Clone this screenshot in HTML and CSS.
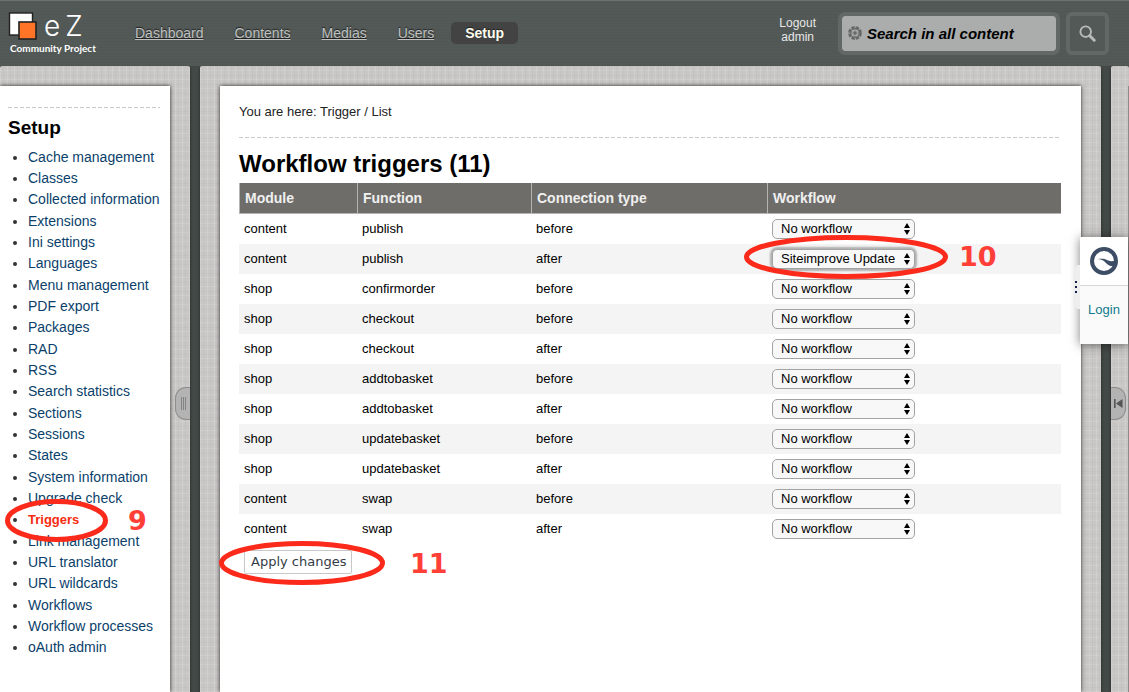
FILE: index.html
```html
<!DOCTYPE html>
<html lang="en">
<head>
<meta charset="utf-8">
<title>Workflow triggers</title>
<link rel="stylesheet" href="styles.css">
</head>
<body>
<svg class="defs" aria-hidden="true">
  <symbol id="updown" viewBox="0 0 6 12"><path d="M3 0 6 5H0zM3 12 0 7h6z"/></symbol>
</svg>
<header class="header">
  <a class="logo" href="#">
    <span class="logo-row">
      <svg class="logo-mark" width="30" height="29" viewBox="0 0 30 29">
        <rect x="1.500" y="1" width="23" height="22" fill="#fff" stroke="#222" stroke-width="1.4"/>
        <rect x="11" y="10" width="17" height="17" fill="#ff7426" stroke="#222" stroke-width="1.6"/>
      </svg>
      <span class="logo-e">e</span><span class="logo-z">Z</span>
    </span>
    <span class="logo-sub">Community Project</span>
  </a>
  <nav class="nav">
    <a href="#">Dashboard</a>
    <a href="#">Contents</a>
    <a href="#">Medias</a>
    <a href="#">Users</a>
    <a href="#" class="active">Setup</a>
  </nav>
  <a class="logout" href="#">Logout<br>admin</a>
  <form class="search">
    <div class="search-box">
      <svg width="14" height="14" viewBox="0 0 14 14" fill="none" stroke="#666967">
        <circle cx="7" cy="7" r="5.5" stroke-width="2.8" stroke-dasharray="3.3 1.02"/>
        <circle cx="7" cy="7" r="4.300" stroke-width="1.200"/>
        <path d="M7 3.500v7M3.500 7h7" stroke-width="1" stroke-dasharray="1 1"/>
        <rect x="5.5" y="5.5" width="3" height="3" fill="#666967" stroke="none"/>
      </svg>
      <input type="text" aria-label="Search in all content" placeholder="Search in all content">
    </div>
    <button type="button" class="search-btn" aria-label="Search">
      <svg width="17" height="17" viewBox="0 0 17 17" fill="none" stroke="#b9bbba">
        <circle cx="6.7" cy="6.7" r="5.3" stroke-width="1.9"/>
        <path d="m10.8 10.8 4.4 4.4" stroke-width="3" stroke-linecap="round"/>
      </svg>
    </button>
  </form>
</header>
<div class="columns">
  <aside class="panel side">
    <div class="sheet side-sheet">
      <h2>Setup</h2>
      <ul class="menu">
        <li><a href="#">Cache management</a></li>
        <li><a href="#">Classes</a></li>
        <li><a href="#">Collected information</a></li>
        <li><a href="#">Extensions</a></li>
        <li><a href="#">Ini settings</a></li>
        <li><a href="#">Languages</a></li>
        <li><a href="#">Menu management</a></li>
        <li><a href="#">PDF export</a></li>
        <li><a href="#">Packages</a></li>
        <li><a href="#">RAD</a></li>
        <li><a href="#">RSS</a></li>
        <li><a href="#">Search statistics</a></li>
        <li><a href="#">Sections</a></li>
        <li><a href="#">Sessions</a></li>
        <li><a href="#">States</a></li>
        <li><a href="#">System information</a></li>
        <li><a href="#">Upgrade check</a></li>
        <li class="marked"><a href="#" class="current">Triggers</a>
          <svg class="ring ring-menu" viewBox="0 0 103 43"><ellipse cx="51.5" cy="21.5" rx="49" ry="19"/></svg>
          <span class="step step-menu">9</span></li>
        <li><a href="#">Link management</a></li>
        <li><a href="#">URL translator</a></li>
        <li><a href="#">URL wildcards</a></li>
        <li><a href="#">Workflows</a></li>
        <li><a href="#">Workflow processes</a></li>
        <li><a href="#">oAuth admin</a></li>
      </ul>
    </div>
    <button type="button" class="handle handle-left" aria-label="Resize menu">
      <svg width="7" height="13" viewBox="0 0 7 13" stroke="#7d7d7d"><path d="M1.5 0v13M3.5 0v13M5.5 0v13" stroke-width=".9"/></svg>
    </button>
  </aside>
  <main class="panel main">
    <div class="sheet main-sheet">
      <p class="path">You are here: Trigger / List</p>
      <h1>Workflow triggers (11)</h1>
      <table class="list">
        <colgroup><col class="c-module"><col class="c-function"><col class="c-type"><col></colgroup>
        <thead><tr><th>Module</th><th>Function</th><th>Connection type</th><th>Workflow</th></tr></thead>
        <tbody>
          <tr><td>content</td><td>publish</td><td>before</td><td><div class="pick"><select aria-label="Workflow before content publish"><option>No workflow</option></select><svg><use href="#updown"/></svg></div></td></tr>
          <tr><td>content</td><td>publish</td><td>after</td><td><div class="pick focus"><select aria-label="Workflow after content publish"><option>Siteimprove Update</option></select><svg><use href="#updown"/></svg>
            <svg class="ring ring-pick" viewBox="0 0 204 44"><ellipse cx="102" cy="22" rx="99.5" ry="19.5"/></svg>
            <span class="step step-pick">10</span></div></td></tr>
          <tr><td>shop</td><td>confirmorder</td><td>before</td><td><div class="pick"><select aria-label="Workflow before shop confirmorder"><option>No workflow</option></select><svg><use href="#updown"/></svg></div></td></tr>
          <tr><td>shop</td><td>checkout</td><td>before</td><td><div class="pick"><select aria-label="Workflow before shop checkout"><option>No workflow</option></select><svg><use href="#updown"/></svg></div></td></tr>
          <tr><td>shop</td><td>checkout</td><td>after</td><td><div class="pick"><select aria-label="Workflow after shop checkout"><option>No workflow</option></select><svg><use href="#updown"/></svg></div></td></tr>
          <tr><td>shop</td><td>addtobasket</td><td>before</td><td><div class="pick"><select aria-label="Workflow before shop addtobasket"><option>No workflow</option></select><svg><use href="#updown"/></svg></div></td></tr>
          <tr><td>shop</td><td>addtobasket</td><td>after</td><td><div class="pick"><select aria-label="Workflow after shop addtobasket"><option>No workflow</option></select><svg><use href="#updown"/></svg></div></td></tr>
          <tr><td>shop</td><td>updatebasket</td><td>before</td><td><div class="pick"><select aria-label="Workflow before shop updatebasket"><option>No workflow</option></select><svg><use href="#updown"/></svg></div></td></tr>
          <tr><td>shop</td><td>updatebasket</td><td>after</td><td><div class="pick"><select aria-label="Workflow after shop updatebasket"><option>No workflow</option></select><svg><use href="#updown"/></svg></div></td></tr>
          <tr><td>content</td><td>swap</td><td>before</td><td><div class="pick"><select aria-label="Workflow before content swap"><option>No workflow</option></select><svg><use href="#updown"/></svg></div></td></tr>
          <tr><td>content</td><td>swap</td><td>after</td><td><div class="pick"><select aria-label="Workflow after content swap"><option>No workflow</option></select><svg><use href="#updown"/></svg></div></td></tr>
        </tbody>
      </table>
      <div class="actions">
        <button type="button" class="apply">Apply changes</button>
        <svg class="ring ring-apply" viewBox="0 0 166 44"><ellipse cx="83" cy="22" rx="80.5" ry="19.5"/></svg>
        <span class="step step-apply">11</span>
      </div>
    </div>
  </main>
  <aside class="panel rail">
    <button type="button" class="handle handle-right" aria-label="Show right menu">
      <svg width="9" height="9" viewBox="0 0 9 9" fill="#555"><path d="M0 0h1.6v9H0zM8.5 0v9L2 4.5z"/></svg>
    </button>
  </aside>
</div>
<aside class="widget">
  <span class="widget-grip"><svg width="3" height="12" viewBox="0 0 3 12" fill="#14204a"><path d="M0 0h2v2H0zM0 5h2v2H0zM0 10h2v2H0z"/></svg></span>
  <div class="widget-logo">
    <svg width="28" height="28" viewBox="0 0 28 28">
      <circle cx="14" cy="14" r="12" fill="none" stroke="#3d4d66" stroke-width="4"/>
      <path d="M8 12c4-.6 6.500-.2 9.500 1.200 3 1.200 5 1.200 7.500.3l-1 5.500c-3.500.4-6-.6-8-3C14 13.800 12 12.500 8 12z" fill="#3d4d66"/>
    </svg>
  </div>
  <a class="widget-login" href="#">Login</a>
</aside>
</body>
</html>
```
FILE: styles.css
```css
* { box-sizing: border-box; }
body {
  margin: 0;
  min-height: 100vh;
  display: flex;
  flex-direction: column;
  position: relative;
  overflow-x: hidden;
  background: #434947;
  font: 14px/21px "Liberation Sans", Arial, sans-serif;
  color: #000;
}
.defs { position: absolute; width: 0; height: 0; }
button, input, select { font-family: inherit; margin: 0; }

/* header */
.header {
  display: flex;
  align-items: center;
  height: 66px;
  padding: 0 20px 1px 8px;
  border-top: 1px solid #6c706e;
  background:
    repeating-linear-gradient(0deg, rgba(0,0,0,.02) 0 1px, transparent 1px 3px),
    #525956;
}
.logo { width: 113px; color: #fff; text-decoration: none; }
.logo-row { display: flex; align-items: center; height: 30px; }
.logo-e, .logo-z { font: 300 28px/30px Inter, "DejaVu Sans", sans-serif; }
.logo-e { margin-left: 6px; }
.logo-z { margin-left: 5px; }
.logo-sub { display: block; padding-left: 2px; font: bold 10px/14px Lato, "Open Sans", sans-serif; white-space: nowrap; }
.nav { display: flex; gap: 3px; }
.nav a {
  padding: 0 14px;
  line-height: 22px;
  color: #bfc1c0;
  text-shadow: 0 -1px 1px #222;
}
.nav .active { background: #434343; border-radius: 5px; color: #fffff0; font-weight: bold; text-decoration: none; }
.logout {
  margin-left: auto;
  margin-right: 22px;
  padding-bottom: 6px;
  font-size: 12px;
  line-height: 14px;
  text-align: center;
  text-decoration: none;
  color: #e8e8e8;
}
.search { display: flex; gap: 6px; }
.search-box {
  display: flex;
  align-items: center;
  gap: 5px;
  width: 222px;
  height: 43px;
  padding: 0 6px;
  border: 4px solid #626866;
  border-radius: 7px;
  background: #abadac;
  background-clip: padding-box;
}
.search-box input {
  flex: 1;
  min-width: 0;
  padding: 0;
  border: 0;
  outline: 0;
  background: none;
  font-size: 15px;
  font-weight: bold;
  font-style: italic;
}
.search-box input::placeholder { color: #000; opacity: 1; }
.search-btn {
  display: grid;
  place-items: center;
  width: 43px;
  height: 43px;
  padding: 0;
  border: 4px solid #626866;
  border-radius: 6px;
  background: #525956;
}

/* panels */
.columns {
  flex: 1;
  display: grid;
  grid-template-columns: 190px minmax(0, 1fr) 18px;
  gap: 10px;
  background: #434947;
}
.panel {
  position: relative;
  display: flex;
  padding-top: 20px;
  border-radius: 2px 2px 0 0;
  box-shadow: 0 2px 3px #222;
  background:
    repeating-linear-gradient(90deg, rgba(255,255,255,.14) 0 1px, transparent 1px 3px, rgba(0,0,0,.02) 3px 4px, transparent 4px 7px),
    repeating-linear-gradient(0deg, rgba(255,255,255,.1) 0 1px, transparent 1px 4px, rgba(0,0,0,.02) 4px 5px, transparent 5px 9px),
    #c9c7c6;
}
.side { padding-right: 20px; }
.main { padding-left: 20px; padding-right: 20px; }
.sheet { flex: 1; min-width: 0; background: #fff; box-shadow: 0 0 4px #222; }

/* left menu */
.side-sheet { padding: 21px 10px 0 8px; }
.side-sheet h2, .path {
  background: repeating-linear-gradient(90deg, #c8c8c8 0 4px, transparent 4px 6px) top / 100% 1px no-repeat;
}
.side-sheet h2 { margin: 0 0 7px; padding-top: 9px; font-size: 19px; line-height: 24px; }
.menu { margin: 0; padding-left: 20px; color: #333; white-space: nowrap; }
.menu li:nth-child(3n) { padding-bottom: 1px; }
.menu a { color: #0b3f6b; text-decoration: none; }
.menu .current { color: #f52c10; font-weight: bold; font-size: 13px; }
.marked { position: relative; }

/* content */
.main-sheet { padding: 15px 20px 0 19px; }
.path { margin: 0 0 14px; padding-bottom: 16px; font-size: 13px; color: #222; background-position: bottom; }
h1 { margin: 0; font-size: 24px; line-height: 24px; padding-bottom: 7px; }
.list { width: 100%; table-layout: fixed; border-collapse: separate; border-spacing: 0; }
.c-module { width: 118px; }
.c-function { width: 174px; }
.c-type { width: 236px; }
.list th {
  height: 31px;
  padding: 0 5px;
  border-left: 1px solid #b4b4b2;
  border-bottom: 1px solid #b4b4b2;
  background: #6f6d69;
  color: #f0f0f0;
  text-align: left;
}
.list td { height: 30px; padding: 0 5px 2px; font-size: 13px; }
.list td:last-child { padding-bottom: 0; }
.list tbody tr:nth-child(even) { background: #f4f4f4; }
.pick { position: relative; display: flex; width: 143px; }
.pick select {
  width: 100%;
  height: 20px;
  padding: 0 14px 0 8px;
  border: 1px solid #a3a3a3;
  border-radius: 5px;
  background: #f8f8f8;
  color: #000;
  font-size: 13px;
  line-height: 18px;
  appearance: none;
}
.pick > svg:not(.ring) { position: absolute; right: 5px; top: 4px; width: 6px; height: 12px; pointer-events: none; }
.focus select { box-shadow: 0 0 2px 2px #b0b0b0; }
.actions { position: relative; margin: 6px 5px 0; display: flex; }
.apply {
  height: 24px;
  padding: 0 5px 0 6px;
  border: 1px solid #c8c8c8;
  border-radius: 2px;
  background: #fff;
  color: #333c46;
  font: 13px/22px "DejaVu Sans", Verdana, sans-serif;
}

/* numbered call-outs */
.ring { position: absolute; z-index: 2; pointer-events: none; fill: none; stroke: #fc2a1b; stroke-width: 5px; }
.step { position: absolute; z-index: 2; font: bold 27px/28px "DejaVu Sans", Verdana, sans-serif; color: #ff3f38; }
.ring-menu { left: -23px; top: -10px; width: 103px; height: 43px; }
.step-menu { left: 100px; top: -2px; }
.ring-pick { left: -28px; top: -14px; width: 204px; height: 44px; }
.step-pick { left: 187px; top: -6px; }
.ring-apply { left: -25px; top: -9px; width: 166px; height: 44px; }
.step-apply { left: 166px; top: 0; }

/* drag handles */
.handle {
  position: absolute;
  top: 321px;
  display: grid;
  place-items: center;
  width: 15px;
  height: 33px;
  padding: 0;
  border: 1px solid #8e8e8e;
  background: #b3b3b3;
}
.handle-left { right: 0; border-right: 0; border-radius: 11px 0 0 11px; }
.handle-right { left: 0; border-left: 0; border-radius: 0 11px 11px 0; }
.rail::after { content: ""; position: absolute; right: 0; top: 20px; bottom: 0; width: 1px; background: #8c8b8a; }

/* docked widget */
.widget {
  position: absolute;
  top: 237px;
  right: 1px;
  z-index: 3;
  width: 48px;
  background: #fafafa;
  box-shadow: 0 1px 10px rgba(0,0,0,.5);
}
.widget-logo { display: grid; place-items: center; height: 49px; background: #fff; border-bottom: 1px solid #d8d8d8; }
.widget-login { display: block; padding: 13px 0 24px; text-align: center; text-decoration: none; font-size: 13px; color: #0f7b8c; }
.widget-grip {
  position: absolute;
  left: -5px;
  top: 28px;
  display: flex;
  align-items: center;
  width: 5px;
  height: 44px;
  border-radius: 4px 0 0 4px;
  background: #eee;
}
```
